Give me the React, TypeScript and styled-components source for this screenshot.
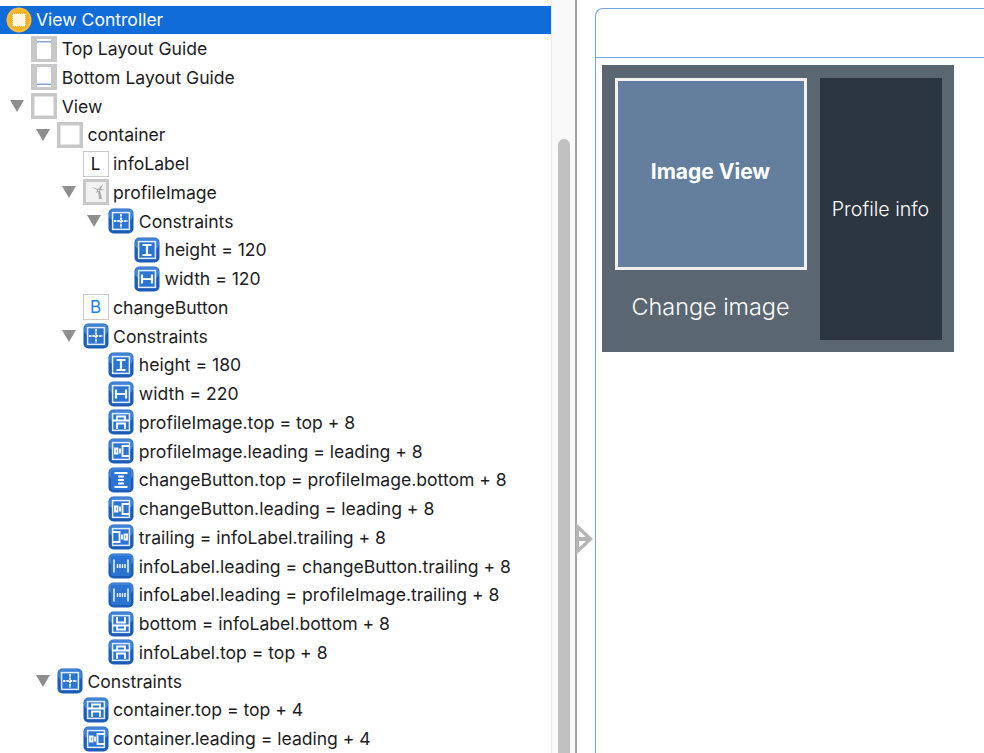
import React from 'react'
import styled, { createGlobalStyle } from 'styled-components'

const GlobalStyle = createGlobalStyle`
	html, body {
		margin: 0;
		padding: 0;
		background: #fff;
		overflow: hidden;
	}
`

const Page = styled.div`
	display: flex;
	width: 984px;
	height: 753px;
	overflow: hidden;
	position: relative;
`

const Outline = styled.div`
	width: 551px;
	flex: none;
	padding-top: 5.6px;
	overflow: hidden;
	font-family: "Inter", "Liberation Sans", sans-serif;
`

const Row = styled.div<{ $depth: number, $selected?: boolean }>`
	display: flex;
	align-items: center;
	height: 28.76px;
	padding-left: ${p => 5.5 + p.$depth * 25.7}px;
	background: ${p => p.$selected ? '#0f6cd9' : 'transparent'};
	color: ${p => p.$selected ? '#fff' : '#1d1d1f'};
	font-size: 17.6px;
	letter-spacing: -0.02px;
	white-space: nowrap;
`

const Caret = styled.span`
	width: 0;
	height: 0;
	margin-left: -21px;
	margin-right: 7px;
	border-left: 7px solid transparent;
	border-right: 7px solid transparent;
	border-top: 12px solid #8e8e8e;
`

const Label = styled.span`
	margin-left: 4.5px;
`

const IconBox = styled.span<{ $blue?: boolean }>`
	width: 26px;
	height: 26px;
	flex: none;
	box-sizing: border-box;
	display: flex;
	align-items: center;
	justify-content: center;
	border: 1px solid #c9c9c9;
	background: #fff;
	font-size: 17px;
	color: ${p => p.$blue ? '#1d7cf2' : '#111'};
`

const ScrollTrack = styled.div`
	width: 26px;
	flex: none;
	box-sizing: border-box;
	display: flex;
	padding: 139px 5px 0 6px;
	background: #f9f9f9;
	border-left: 1px solid #e8e8e8;
	border-right: 2px solid #a2a2a2;
`

const ScrollThumb = styled.div`
	flex: 1;
	border-radius: 6px 6px 0 0;
	background: #c1c1c1;
`

const Canvas = styled.div`
	flex: 1;
	display: flex;
	padding: 8px 0 0 18px;
	min-width: 0;
`

const Scene = styled.div`
	flex: 1;
	border: solid #6ea6e2;
	border-width: 1.5px 0 0 1.5px;
	border-top-left-radius: 8px;
`

const SceneBar = styled.div`
	height: 47.5px;
	border-bottom: 1.5px solid #6ea6e2;
`

const SceneBody = styled.div`
	padding: 7px 0 0 5.5px;
`

const Container = styled.div`
	box-sizing: border-box;
	width: 352px;
	height: 287px;
	display: flex;
	gap: 13px;
	padding: 13px 12px 12px 13px;
	background: #5a6672;
	font-family: "Inter", "Liberation Sans", sans-serif;
	color: #fff;
`

const LeftColumn = styled.div`
	width: 192px;
	display: flex;
	flex-direction: column;
`

const ImageView = styled.div`
	box-sizing: border-box;
	height: 192px;
	display: flex;
	align-items: center;
	justify-content: center;
	padding-bottom: 4px;
	background: #647e9e;
	border: 3px solid #f1f1ef;
	font-size: 21px;
	font-weight: 700;
`

const ChangeImage = styled.div`
	flex: 1;
	display: flex;
	align-items: center;
	justify-content: center;
	padding-top: 3px;
	font-size: 23.4px;
	font-weight: 300;
`

const ProfileInfo = styled.div`
	flex: 1;
	display: flex;
	align-items: center;
	justify-content: center;
	background: #2c3641;
	font-size: 19.6px;
	font-weight: 300;
`

const SegueArrow = styled.svg`
	position: absolute;
	left: 576px;
	top: 523px;
`

type Kind = 'vc' | 'guideTop' | 'guideBottom' | 'view' | 'label' | 'image' | 'button'
	| 'constraints' | 'height' | 'width' | 'top' | 'leading' | 'vspace' | 'trailing' | 'hspace' | 'bottom'

type Item = { text: string, depth: number, kind: Kind, open?: boolean, selected?: boolean }

const items: Item[] = [
	{ text: 'View Controller', depth: 0, kind: 'vc', selected: true },
	{ text: 'Top Layout Guide', depth: 1, kind: 'guideTop' },
	{ text: 'Bottom Layout Guide', depth: 1, kind: 'guideBottom' },
	{ text: 'View', depth: 1, kind: 'view', open: true },
	{ text: 'container', depth: 2, kind: 'view', open: true },
	{ text: 'infoLabel', depth: 3, kind: 'label' },
	{ text: 'profileImage', depth: 3, kind: 'image', open: true },
	{ text: 'Constraints', depth: 4, kind: 'constraints', open: true },
	{ text: 'height = 120', depth: 5, kind: 'height' },
	{ text: 'width = 120', depth: 5, kind: 'width' },
	{ text: 'changeButton', depth: 3, kind: 'button' },
	{ text: 'Constraints', depth: 3, kind: 'constraints', open: true },
	{ text: 'height = 180', depth: 4, kind: 'height' },
	{ text: 'width = 220', depth: 4, kind: 'width' },
	{ text: 'profileImage.top = top + 8', depth: 4, kind: 'top' },
	{ text: 'profileImage.leading = leading + 8', depth: 4, kind: 'leading' },
	{ text: 'changeButton.top = profileImage.bottom + 8', depth: 4, kind: 'vspace' },
	{ text: 'changeButton.leading = leading + 8', depth: 4, kind: 'leading' },
	{ text: 'trailing = infoLabel.trailing + 8', depth: 4, kind: 'trailing' },
	{ text: 'infoLabel.leading = changeButton.trailing + 8', depth: 4, kind: 'hspace' },
	{ text: 'infoLabel.leading = profileImage.trailing + 8', depth: 4, kind: 'hspace' },
	{ text: 'bottom = infoLabel.bottom + 8', depth: 4, kind: 'bottom' },
	{ text: 'infoLabel.top = top + 8', depth: 4, kind: 'top' },
	{ text: 'Constraints', depth: 2, kind: 'constraints', open: true },
	{ text: 'container.top = top + 4', depth: 3, kind: 'top' },
	{ text: 'container.leading = leading + 4', depth: 3, kind: 'leading' },
]

// strokes inside the blue constraint badge, drawn on a 26 box
const glyphs: Partial<Record<Kind, React.ReactNode>> = {
	constraints: <path d="M13 6v14M6 13h14" strokeWidth="2" strokeDasharray="2.4 1" />,
	height: <path d="M8.5 8h9M8.5 18h9M13 8v10" strokeWidth="2.2" />,
	width: <path d="M8 8.5v9M18 8.5v9M8 13h10" strokeWidth="2.2" />,
	top: <path d="M5 11.5h16M9 11v-3.5h8v3.5M9 20v-5.5h8v5.5" strokeWidth="1.8" />,
	bottom: <path d="M5 14.5h16M9 15v3.5h8v-3.5M9 6v5.5h8v-5.5" strokeWidth="1.8" />,
	leading: <path d="M21 8h-6.5v10h6.5M7 10.5h2.5v5h-2.5zM12 10.5v5" strokeWidth="1.8" />,
	trailing: <path d="M5 8h6.5v10h-6.5M16.5 10.5h2.5v5h-2.5zM14 10.5v5" strokeWidth="1.8" />,
	vspace: <path d="M6.5 6h13M6.5 20h13M10 9.5h6M10 13h6M10 16.5h6" strokeWidth="2" />,
	hspace: <path d="M6 6.5v13M20 6.5v13M9.5 11v4M12 11v4M14.5 11v4M17 11v4" strokeWidth="1.4" />,
}

function ConstraintIcon({ kind }: { kind: Kind }) {
	const framed = kind !== 'vspace' && kind !== 'hspace'
	return (
		<svg width="26" height="26" viewBox="0 0 26 26" style={{ flex: 'none' }}>
			<rect x="0.5" y="0.5" width="25" height="25" rx="5" fill="#1c5cb6" />
			<rect x="1" y="1" width="24" height="11" rx="4.5" fill="#3f83d8" />
			{framed
				? <rect x="4.6" y="4.6" width="16.8" height="16.8" fill="#2a74d4" stroke="#e4eefa" strokeWidth="1.5" />
				: <rect x="3" y="3" width="20" height="20" rx="2" fill="#2a74d4" />}
			<g fill="none" stroke="#fff" strokeWidth="1.6">{glyphs[kind]}</g>
		</svg>
	)
}

function GreyBox({ kind }: { kind: Kind }) {
	return (
		<svg width="26" height="26" viewBox="0 0 26 26" style={{ flex: 'none' }}>
			<rect x="0" y="0" width="26" height="26" fill="#c8c8c8" />
			{kind === 'view' && <rect x="3.5" y="3.5" width="19" height="19" fill="#fff" />}
			{kind === 'guideTop' && (
				<g>
					<rect x="6" y="3" width="14" height="20" fill="#fff" />
					<rect x="6" y="5" width="14" height="1.5" fill="#7ea8d8" />
				</g>
			)}
			{kind === 'guideBottom' && (
				<g>
					<rect x="6" y="3" width="14" height="20" fill="#fff" />
					<rect x="6" y="19.5" width="14" height="1.5" fill="#7ea8d8" />
				</g>
			)}
			{kind === 'image' && (
				<g>
					<rect x="3" y="3" width="20" height="20" fill="#f2f2f2" />
					<path d="M15 11l1 9h3l-2-9zM9 8l6 2 5-5-2 5 4 1-6 .5-3 3 1-3.5z" fill="#adadad" />
				</g>
			)}
		</svg>
	)
}

function RowIcon({ kind }: { kind: Kind }) {
	if (kind === 'vc') {
		return (
			<svg width="26" height="26" viewBox="0 0 26 26" style={{ flex: 'none' }}>
				<circle cx="13" cy="13" r="12.5" fill="#f9bd35" />
				<circle cx="13" cy="13" r="10.5" fill="#f6b026" />
				<rect x="7" y="7" width="12" height="12" fill="#fff6df" stroke="#fff" strokeDasharray="1 1" />
			</svg>
		)
	}
	if (kind === 'label') return <IconBox>L</IconBox>
	if (kind === 'button') return <IconBox $blue>B</IconBox>
	if (kind === 'view' || kind === 'guideTop' || kind === 'guideBottom' || kind === 'image') return <GreyBox kind={kind} />
	return <ConstraintIcon kind={kind} />
}

export default function App() {
	return (
		<Page>
			<GlobalStyle />
			<Outline>
				{items.map((item, i) => (
					<Row key={i} $depth={item.depth} $selected={item.selected}>
						{item.open && <Caret />}
						<RowIcon kind={item.kind} />
						<Label>{item.text}</Label>
					</Row>
				))}
			</Outline>
			<ScrollTrack>
				<ScrollThumb />
			</ScrollTrack>
			<Canvas>
				<Scene>
					<SceneBar />
					<SceneBody>
						<Container>
							<LeftColumn>
								<ImageView>Image View</ImageView>
								<ChangeImage>Change image</ChangeImage>
							</LeftColumn>
							<ProfileInfo>Profile info</ProfileInfo>
						</Container>
					</SceneBody>
				</Scene>
			</Canvas>
			<SegueArrow width="17" height="32" viewBox="0 0 17 32">
				<path d="M0 0L17 16 0 32zM3 7.5V14H10zM3 18V24.5L10 18z" fill="#b5b5b5" fillRule="evenodd" />
			</SegueArrow>
		</Page>
	)
}
